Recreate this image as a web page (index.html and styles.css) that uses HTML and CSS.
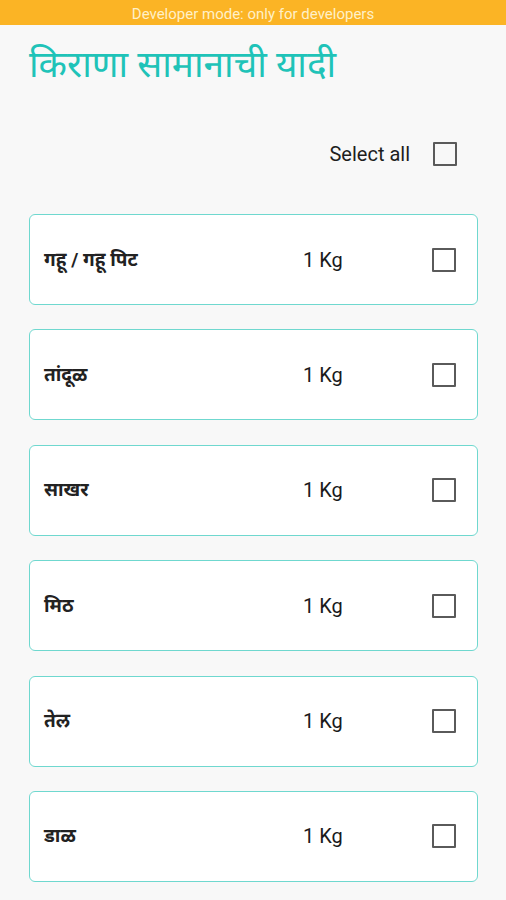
FILE: index.html
```html
<!DOCTYPE html>
<html lang="mr">
<head>
<meta charset="utf-8">
<title>किराणा सामानाची यादी</title>
<link rel="stylesheet" href="styles.css">
</head>
<body>
<div class="banner">Developer mode: only for developers</div>
<main class="page">
  <h1 class="title">किराणा सामानाची यादी</h1>
  <div class="select-all">
    <span class="select-label">Select all</span>
    <span class="box"></span>
  </div>
  <ul class="list">
    <li class="card"><span class="name">गहू / गहू पिट</span><span class="qty">1 Kg</span><span class="box"></span></li>
    <li class="card"><span class="name">तांदूळ</span><span class="qty">1 Kg</span><span class="box"></span></li>
    <li class="card"><span class="name">साखर</span><span class="qty">1 Kg</span><span class="box"></span></li>
    <li class="card"><span class="name">मिठ</span><span class="qty">1 Kg</span><span class="box"></span></li>
    <li class="card"><span class="name">तेल</span><span class="qty">1 Kg</span><span class="box"></span></li>
    <li class="card"><span class="name">डाळ</span><span class="qty">1 Kg</span><span class="box"></span></li>
  </ul>
</main>
</body>
</html>
```
FILE: styles.css
```css
* { box-sizing: border-box; }
html, body { margin: 0; padding: 0; }
body {
  background: #f8f8f8;
  font-family: Roboto, "Noto Sans", "Noto Sans Devanagari", sans-serif;
  color: #212121;
  width: 506px;
  height: 900px;
  overflow: hidden;
}
.banner {
  height: 25px;
  background: #fbb425;
  color: #fff0c8;
  font-size: 15px;
  line-height: 29px;
  text-align: center;
  overflow: hidden;
}
.page {
  padding: 0 28px 0 29px;
}
.title {
  margin: 14px 0 0;
  font-weight: 400;
  font-size: 37px;
  line-height: 52px;
  color: #1fc3b8;
}
.select-all {
  display: flex;
  justify-content: flex-end;
  align-items: center;
  gap: 23px;
  margin-top: 50px;
  padding-right: 21px;
  height: 26px;
}
.select-label {
  font-size: 20px;
  color: #1e1e1e;
}
.box {
  width: 24px;
  height: 24px;
  border: 2px solid #5a5a5a;
  border-radius: 1px;
  flex: none;
}
.list {
  list-style: none;
  margin: 47px 0 0;
  padding: 0;
  display: flex;
  flex-direction: column;
  gap: 24.4px;
}
.card {
  height: 91px;
  background: #fff;
  border: 1px solid #6fd8cf;
  border-radius: 6px;
  display: flex;
  align-items: center;
  padding: 0 21px 0 14px;
}
.name {
  flex: 1;
  font-size: 19px;
  font-weight: 700;
  color: #222;
  margin-top: -2px;
}
.qty {
  width: 129px;
  font-size: 20px;
  color: #1a1a1a;
}
```
